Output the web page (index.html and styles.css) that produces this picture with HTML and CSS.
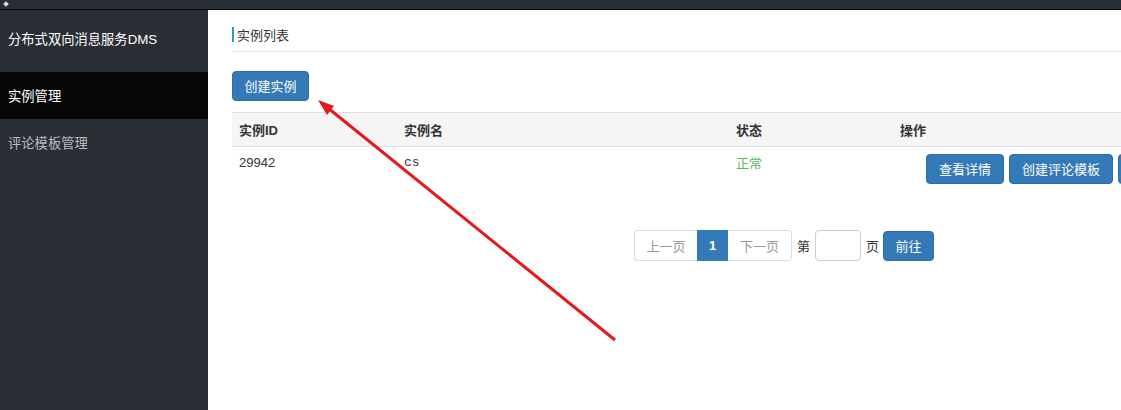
FILE: index.html
```html
<!DOCTYPE html>
<html lang="zh-CN">
<head>
<meta charset="utf-8">
<title>实例列表</title>
<link rel="stylesheet" href="styles.css">
</head>
<body>
<div class="topbar"><span class="topbar-icon"></span></div>
<div class="layout">
  <aside class="sidebar">
    <div class="brand">分布式双向消息服务DMS</div>
    <div class="nav-item active">实例管理</div>
    <div class="nav-item">评论模板管理</div>
  </aside>
  <main class="main">
    <div class="page-head"><span class="page-title">实例列表</span></div>
    <button class="btn btn-primary create">创建实例</button>
    <div class="table-wrap">
      <table class="table">
        <colgroup>
          <col class="c1"><col class="c2"><col class="c3"><col class="c4">
        </colgroup>
        <thead>
          <tr><th>实例ID</th><th>实例名</th><th>状态</th><th>操作</th></tr>
        </thead>
        <tbody>
          <tr>
            <td>29942</td>
            <td class="mono">cs</td>
            <td class="ok">正常</td>
            <td class="ops">
              <button class="btn btn-primary">查看详情</button>
              <button class="btn btn-primary">创建评论模板</button>
              <button class="btn btn-primary">删除实例</button>
            </td>
          </tr>
        </tbody>
      </table>
    </div>
    <div class="pager">
      <div class="pages">
        <span class="pg prev">上一页</span>
        <span class="pg cur">1</span>
        <span class="pg next">下一页</span>
      </div>
      <span class="lbl">第</span>
      <input class="pg-input" type="text">
      <span class="lbl">页</span>
      <button class="btn btn-primary go">前往</button>
    </div>
  </main>
</div>
<svg class="arrow" width="1121" height="410" viewBox="0 0 1121 410">
  <line x1="615" y1="340" x2="328" y2="108" stroke="#e3191c" stroke-width="3"/>
  <polygon points="318,100 334,106 327,115" fill="#e3191c"/>
</svg>
</body>
</html>
```

FILE: styles.css
```css
* { box-sizing: border-box; }
html, body { margin: 0; padding: 0; }
body {
  width: 1121px;
  height: 410px;
  overflow: hidden;
  position: relative;
  font-family: "Liberation Sans", "Noto Sans CJK SC", sans-serif;
  font-size: 13px;
  color: #333;
  background: #fff;
}
.topbar {
  height: 10px;
  background: #292d34;
  border-bottom: 1px solid #0a0a0a;
  position: relative;
}
.topbar-icon {
  position: absolute;
  left: 4px;
  top: 2px;
  width: 4px;
  height: 4px;
  background: #ddd;
  transform: rotate(45deg);
}
.layout {
  display: flex;
  height: 400px;
}
.sidebar {
  width: 208px;
  flex: none;
  background: #2a2e35;
  font-family: "Noto Sans CJK SC", sans-serif;
  font-size: 13.3px;
}
.brand {
  height: 62px;
  line-height: 60px;
  padding-left: 8px;
  color: #fff;
  font-family: "Liberation Sans", "Noto Sans CJK SC", sans-serif;
}
.nav-item {
  height: 47px;
  line-height: 47px;
  padding-left: 8px;
  color: #b8bbc0;
}
.nav-item.active {
  background: #070707;
  color: #fff;
}
.main {
  flex: 1;
  min-width: 0;
  padding-left: 24px;
  overflow: hidden;
}
.page-head {
  margin-top: 17px;
  padding-bottom: 7px;
  border-bottom: 1px solid #e6e6e6;
  line-height: 17px;
}
.page-title {
  display: inline-block;
  border-left: 2px solid #1a9fd3;
  padding-left: 3px;
  line-height: 15px;
  font-family: "Noto Sans CJK SC", sans-serif;
  font-size: 13px;
  color: #333;
}
.btn {
  font-family: "Noto Sans CJK SC", sans-serif;
  font-size: 13px;
  border-radius: 4px;
  cursor: pointer;
  padding: 0 12px;
  height: 30px;
  line-height: 28px;
}
.btn-primary {
  background: #337ab7;
  border: 1px solid #2e6da4;
  color: #fff;
}
.create {
  margin-top: 19px;
  display: block;
  width: 77px;
  padding: 0;
}
.table-wrap {
  margin-top: 11px;
  width: 1100px;
}
.table {
  border-collapse: collapse;
  width: 1100px;
  table-layout: fixed;
}
.c1 { width: 165px; }
.c2 { width: 332px; }
.c3 { width: 164px; }
.table th {
  background: #f5f5f5;
  text-align: left;
  font-weight: bold;
  height: 34px;
  padding: 0 7px;
  border-top: 1px solid #ddd;
  border-bottom: 1px solid #ddd;
  font-family: "Liberation Sans", "Noto Sans CJK SC", sans-serif;
  color: #333;
}
.table td {
  padding: 7px 7px 8px;
  vertical-align: top;
  line-height: 17px;
  color: #333;
  white-space: nowrap;
}
.table td.mono {
  font-family: "Liberation Mono", monospace;
  font-size: 13px;
}
.table td.ok { color: #5cb85c; font-family: "Noto Sans CJK SC", sans-serif; }
.table td.ops {
  padding: 7px 0 8px 33px;
  display: flex;
  gap: 5px;
}
.ops .btn { width: auto; }
.pager {
  display: flex;
  align-items: center;
  margin-top: 38px;
  margin-left: 402px;
  font-family: "Noto Sans CJK SC", sans-serif;
}
.pages {
  display: flex;
  height: 31px;
}
.pg {
  display: block;
  height: 31px;
  line-height: 29px;
  border: 1px solid #ddd;
  text-align: center;
  color: #999;
  font-size: 13px;
}
.prev { width: 63px; border-radius: 4px 0 0 4px; border-right: none; }
.cur {
  width: 31px;
  background: #337ab7;
  border-color: #337ab7;
  color: #fff;
  font-weight: bold;
  font-family: "Liberation Sans", sans-serif;
}
.next { width: 64px; border-radius: 0 4px 4px 0; border-left: none; }
.lbl { margin: 0 5px; color: #333; font-size: 13px; }
.pg-input {
  width: 46px;
  height: 31px;
  border: 1px solid #ccc;
  border-radius: 4px;
  padding: 0;
  margin: 0;
}
.go { width: 51px; padding: 0; margin-left: -1px; }
.arrow {
  position: absolute;
  left: 0;
  top: 0;
  pointer-events: none;
}
```
